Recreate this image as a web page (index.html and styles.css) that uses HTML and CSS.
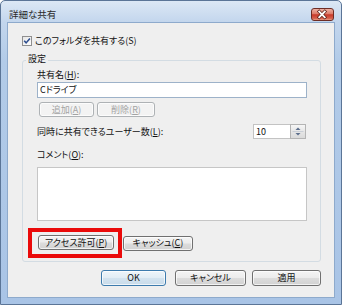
FILE: index.html
```html
<!DOCTYPE html>
<html lang="ja">
<head>
<meta charset="utf-8">
<title>詳細な共有</title>
<link rel="stylesheet" href="styles.css">
</head>
<body>
<div class="window">
  <div class="titlebar">
    <span class="title">詳細な共有</span>
    <span class="close">
      <svg width="23" height="13" viewBox="0 0 23 13">
        <path d="M8.6 3.4 L14.4 9.4 M14.4 3.4 L8.6 9.4" stroke="#5a1e16" stroke-width="3.4" stroke-linecap="square" fill="none"/>
        <path d="M8.6 3.4 L14.4 9.4 M14.4 3.4 L8.6 9.4" stroke="#ffffff" stroke-width="1.9" stroke-linecap="square" fill="none"/>
      </svg>
    </span>
  </div>
  <div class="client">
    <div class="check-row">
      <span class="checkbox">
        <svg width="10" height="10" viewBox="0 0 10 10">
          <path d="M2.2 4.8 L4.1 6.9 L7.9 2.4" stroke="#2f4f8f" stroke-width="1.6" fill="none"/>
        </svg>
      </span>
      <span class="check-label">このフォルダを共有する(S)</span>
    </div>
    <div class="group">
      <div class="legend">設定</div>
      <div class="label lbl-share">共有名(<u>H</u>):</div>
      <div class="textbox">Cドライブ</div>
      <div class="btn-row">
        <span class="btn disabled w-add">追加(<u>A</u>)</span>
        <span class="btn disabled w-del">削除(<u>R</u>)</span>
      </div>
      <div class="users-row">
        <span class="label">同時に共有できるユーザー数(<u>L</u>):</span>
        <span class="spinner">
          <span class="spin-field">10</span>
          <span class="spin-btn">
            <svg width="14" height="13" viewBox="0 0 14 13">
              <path d="M4.5 5 L7 2.5 L9.5 5 Z" fill="#5d6f8c"/>
              <path d="M1.5 6.5 H12.5" stroke="#c9ced6" stroke-width="1"/>
              <path d="M4.5 8 L7 10.5 L9.5 8 Z" fill="#5d6f8c"/>
            </svg>
          </span>
        </span>
      </div>
      <div class="label lbl-comment">コメント(<u>O</u>):</div>
      <div class="textarea"></div>
      <div class="perm-row">
        <span class="highlight"><span class="btn w-perm">アクセス許可(<u>P</u>)</span></span>
        <span class="btn w-cache">キャッシュ(<u>C</u>)</span>
      </div>
    </div>
    <div class="footer">
      <span class="btn default w-ok">OK</span>
      <span class="btn w-cancel">キャンセル</span>
      <span class="btn w-apply">適用</span>
    </div>
  </div>
</div>
</body>
</html>
```

FILE: styles.css
```css
* {
  box-sizing: border-box;
}

html,
body {
  margin: 0;
  padding: 0;
}

body {
  width: 342px;
  height: 305px;
  overflow: hidden;
  font-family: "Noto Sans CJK JP", "Noto Sans", sans-serif;
  font-size: 9px;
  font-feature-settings: "palt";
  color: #111;
  background: #ffffff;
}

u {
  text-underline-offset: 1px;
}

.window {
  width: 342px;
  height: 305px;
  border: 1px solid #5b7597;
  border-radius: 5px 5px 0 0;
  background: linear-gradient(180deg, #dce8f5 0px, #c3d6ed 21px, #b2cbe8 60px, #a9c4e6 100%);
  display: flex;
  flex-direction: column;
}

.titlebar {
  height: 21px;
  flex: none;
  display: flex;
  align-items: flex-start;
  justify-content: space-between;
  padding: 7px 7px 0 8px;
}

.title {
  font-size: 9.5px;
  line-height: 12px;
  color: #2a2a2a;
}

.close {
  width: 23px;
  height: 13px;
  border: 1px solid #6e2d24;
  border-radius: 3px;
  background: linear-gradient(180deg, #eeb2a4 0%, #dc7a68 45%, #c8392a 52%, #d5604c 85%, #e8a08a 100%);
  display: flex;
}

.close svg {
  margin: -1px 0 0 -1px;
}

.client {
  flex: 1;
  margin: 0 6px 6px 6px;
  border: 1px solid #8eaacc;
  background: #efefef;
  padding: 13px 13px 0 14px;
  display: flex;
  flex-direction: column;
}

.check-row {
  height: 10px;
  display: flex;
  align-items: center;
  gap: 3px;
}

.checkbox {
  width: 10px;
  height: 10px;
  outline: 1px solid #8f8f8f;
  outline-offset: -1px;
  background: linear-gradient(135deg, #e2e2e2 0%, #f6f6f6 60%, #ffffff 100%);
  display: flex;
}

.check-label {
  line-height: 10px;
  white-space: nowrap;
}

.group {
  margin-top: 14px;
  width: 299px;
  border: 1px solid #d3dce3;
  border-radius: 3px;
  padding: 0 13px 3px 14px;
  display: flex;
  flex-direction: column;
}

.legend {
  width: fit-content;
  margin: -8px 0 0 -11px;
  padding: 0 2px;
  height: 12px;
  line-height: 12px;
  background: #efefef;
}

.label {
  line-height: 12px;
  height: 12px;
  white-space: nowrap;
}

.lbl-share {
  margin-top: 4px;
}

.textbox {
  margin-top: 1px;
  height: 16px;
  border: 1px solid #9db2c9;
  background: #ffffff;
  padding-left: 2px;
  line-height: 14px;
}

.btn-row {
  margin-top: 4px;
  margin-left: 2px;
  display: flex;
  gap: 3px;
}

.btn {
  height: 15px;
  display: inline-flex;
  align-items: center;
  justify-content: center;
  border: 1px solid #707070;
  border-radius: 3px;
  background: linear-gradient(180deg, #f4f4f4 0%, #ececec 48%, #dcdcdc 52%, #d2d2d2 100%);
  box-shadow: inset 0 0 0 1px rgba(255, 255, 255, 0.7);
  line-height: 12px;
  white-space: nowrap;
  flex: none;
}

.btn.disabled {
  border-color: #aeb2b5;
  background: #f3f3f3;
  color: #a3a3a3;
}

.w-add { width: 55px; }
.w-del { width: 58px; }
.w-perm { width: 76px; }
.w-cache { width: 70px; margin-left: 1px; }
.w-ok { width: 65px; }
.w-cancel { width: 71px; margin-left: 9px; }
.w-apply { width: 69px; margin-left: 6px; }

.users-row {
  margin-top: 7px;
  height: 15px;
  display: flex;
  align-items: center;
  justify-content: space-between;
  padding-right: 1px;
}

.spinner {
  display: flex;
  height: 15px;
}

.spin-field {
  width: 37px;
  height: 15px;
  border: 1px solid #c3c3c3;
  border-right: 0;
  background: #ffffff;
  padding-left: 2px;
  line-height: 13px;
}

.spin-btn {
  width: 16px;
  height: 15px;
  border: 1px solid #b4b4b4;
  background: linear-gradient(180deg, #f6f6f6 0%, #e6e6e6 50%, #dadada 100%);
  display: flex;
}

.lbl-comment {
  margin-top: 10px;
}

.textarea {
  margin-top: 6px;
  height: 54px;
  border: 1px solid #c6c6c6;
  background: #ffffff;
}

.perm-row {
  margin-top: 7px;
  margin-left: -9px;
  display: flex;
  align-items: center;
}

.highlight {
  display: flex;
  border: 4px solid #ea0a0a;
  padding: 3px 4px 4px 6px;
}

.footer {
  margin-top: 8px;
  display: flex;
  justify-content: flex-end;
}

.footer .btn {
  height: 16px;
}

.btn.default {
  border-color: #3d7bad;
  background: linear-gradient(180deg, #eef5fa 0%, #e2edf5 48%, #d3e3ef 52%, #c8dbea 100%);
}
```
